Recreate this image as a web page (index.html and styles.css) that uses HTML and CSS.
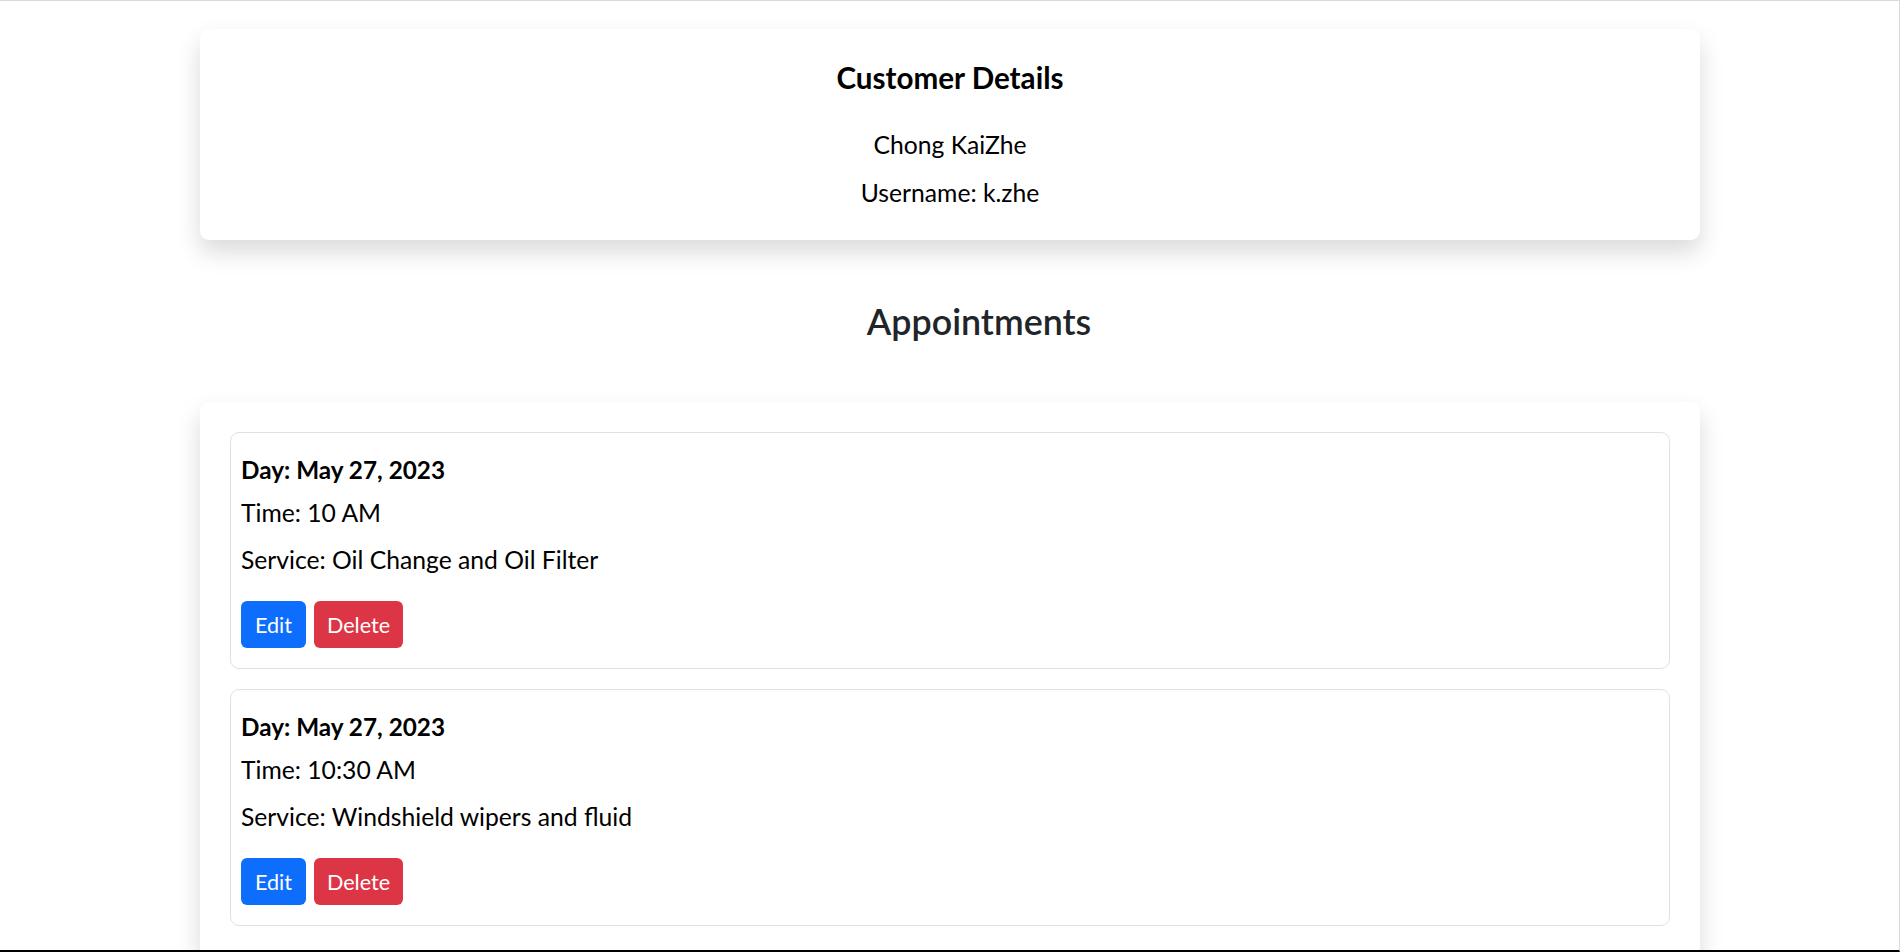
FILE: index.html
```html
<!DOCTYPE html>
<html lang="en">
<head>
<meta charset="utf-8">
<title>Customer Details</title>
<link rel="stylesheet" href="styles.css">
</head>
<body>
<div class="page">
  <section class="card customer-card">
    <h5 class="customer-title">Customer Details</h5>
    <p class="customer-line customer-name">Chong KaiZhe</p>
    <p class="customer-line">Username: k.zhe</p>
  </section>

  <h3 class="section-title">Appointments</h3>

  <section class="card appointments-card">
    <article class="appt">
      <h5 class="appt-day">Day: May 27, 2023</h5>
      <p class="appt-time">Time: 10 AM</p>
      <p class="appt-service">Service: Oil Change and Oil Filter</p>
      <div class="appt-actions">
        <button class="btn btn-edit">Edit</button>
        <button class="btn btn-delete">Delete</button>
      </div>
    </article>
    <article class="appt">
      <h5 class="appt-day">Day: May 27, 2023</h5>
      <p class="appt-time">Time: 10:30 AM</p>
      <p class="appt-service">Service: Windshield wipers and fluid</p>
      <div class="appt-actions">
        <button class="btn btn-edit">Edit</button>
        <button class="btn btn-delete">Delete</button>
      </div>
    </article>
  </section>
</div>
<div class="screen-frame"></div>
</body>
</html>
```
FILE: styles.css
```css
html {
  overflow: hidden;
}

body {
  margin: 0;
  background: #ffffff;
  font-family: "Lato", "Open Sans", sans-serif;
  color: #000000;
}

.page {
  width: 1500px;
  margin: 0 auto;
  padding-top: 29px;
}

.card {
  background: #ffffff;
  border-radius: 9px;
  box-shadow: 0 12px 24px rgba(0, 0, 0, 0.15);
}

.customer-card {
  padding: 31px 0 29px;
  text-align: center;
}

.customer-title {
  margin: 0 0 31px;
  font-size: 29.6px;
  line-height: 36px;
  font-weight: 700;
}

.customer-line {
  margin: 0;
  font-size: 24.7px;
  line-height: 36px;
}

.customer-name {
  margin-bottom: 12px;
}

.section-title {
  margin: 61px 0 59px;
  padding-left: 58px;
  text-align: center;
  font-size: 35.8px;
  line-height: 42px;
  font-weight: 600;
  color: #212529;
}

.appointments-card {
  padding: 30px;
  display: flex;
  flex-direction: column;
  gap: 20px;
}

.appt {
  border: 1px solid #dee2e6;
  border-radius: 9px;
  padding: 19px 10px 20px;
}

.appt-day {
  margin: 0 0 7px;
  font-size: 24.3px;
  line-height: 36px;
  font-weight: 700;
}

.appt-time {
  margin: 0 0 11px;
  font-size: 24.7px;
  line-height: 36px;
}

.appt-service {
  margin: 0 0 23px;
  font-size: 24.7px;
  line-height: 36px;
}

.appt-actions {
  display: flex;
  gap: 8px;
}

.btn {
  height: 47px;
  padding: 1px 0 0;
  border: none;
  border-radius: 6px;
  color: #ffffff;
  font-family: inherit;
  font-size: 21.6px;
  line-height: 46px;
  text-align: center;
}

.btn-edit {
  width: 65px;
  background: #0d6efd;
}

.btn-delete {
  width: 89px;
  background: #dc3545;
}

.screen-frame {
  position: fixed;
  inset: 0;
  border-top: 1px solid #dadada;
  border-right: 1px solid #dadada;
  border-bottom: 2px solid #000000;
  pointer-events: none;
}
```
